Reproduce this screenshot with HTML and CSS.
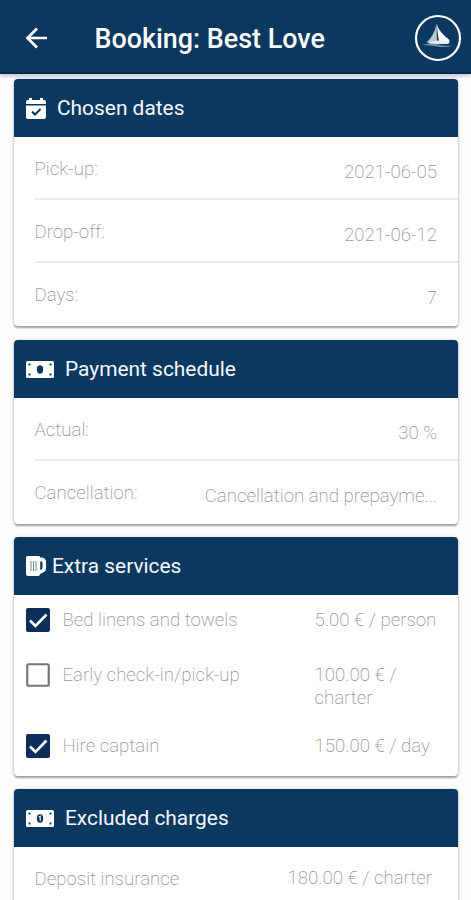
FILE: index.html
```html
<!DOCTYPE html>
<html lang="en">
<head>
<meta charset="utf-8">
<title>Booking: Best Love</title>
<link rel="stylesheet" href="styles.css">
</head>
<body>
<header class="topbar">
  <svg class="back" viewBox="0 0 24 22"><path d="M22 11H3M12 1.5 2.5 11l9.500 9.500" fill="none" stroke="#fff" stroke-width="2.700"/></svg>
  <h1>Booking: Best Love</h1>
  <svg class="logo" viewBox="0 0 48 48">
    <circle cx="24" cy="24" r="22" fill="none" stroke="#fff" stroke-width="2.200"/>
    <path d="M22.500 10 23 28 12.500 28.500Q20 22 22.500 10Z" fill="#b9c9cc"/>
    <path d="M22.500 10Q25 18 35.500 26L35 28.500 25 28Z" fill="#f7faf2"/>
    <path d="M14 28.500 23 26.500 36 28 34 30H16Z" fill="#e5ecea"/>
    <path d="M8 31Q17 28.500 24 30.500T40 31.500Q31 34 23 32.500T8 31Z" fill="#6f8ba2"/>
  </svg>
</header>
<main>
  <section class="card">
    <h2><svg class="calendar" viewBox="0 0 20 23"><path fill="#fff" d="M2 3H3V1H6V3H14V1H17V3H18Q20 3 20 5V7H0V5Q0 3 2 3ZM0 8.500H20V20Q20 22 18 22H2Q0 22 0 20Z"/><path d="m6 14.500 3 3 5.500-5.500" fill="none" stroke="#0b385f" stroke-width="2"/></svg>Chosen dates</h2>
    <div class="row"><span>Pick-up:</span><span class="value">2021-06-05</span></div>
    <div class="row"><span>Drop-off:</span><span class="value">2021-06-12</span></div>
    <div class="row"><span>Days:</span><span class="value">7</span></div>
  </section>
  <section class="card">
    <h2><svg class="money" viewBox="0 0 28 17"><rect width="28" height="17" rx="1.500" fill="#fff"/><ellipse cx="14" cy="8.500" rx="3.200" ry="4.200" fill="#0b385f"/><path d="M2.500 2.500h2v2h-2zM23.500 2.500h2v2h-2zM2.500 12.500h2v2h-2zM23.500 12.500h2v2h-2z" fill="#0b385f"/></svg>Payment schedule</h2>
    <div class="row"><span>Actual:</span><span class="value">30 %</span></div>
    <div class="row"><span>Cancellation:</span><span class="value">Cancellation and prepayme...</span></div>
  </section>
  <section class="card services">
    <h2><svg class="mug" viewBox="0 0 20 20"><path fill="#fff" fill-rule="evenodd" d="M1.500 0H13Q14 0 14 1.500H16Q20 2 20 6V12Q20 15 18 16L14 18Q14 20 12 20H2Q0 20 0 18V1.500Q0 0 1.500 0ZM14.200 5.500V14L16 13Q16.500 12.500 16.500 11V7Q16.500 5.500 15.500 5.500Z"/><path d="M5 5v10M7.500 5v10M10 5v10" stroke="#6d8599" stroke-width="1"/></svg>Extra services</h2>
    <div class="service"><svg class="check" viewBox="0 0 24 24"><rect width="24" height="24" rx="2" fill="#0b2f59"/><path d="m4 12.500 5.500 5.500L20.500 6.500" fill="none" stroke="#fff" stroke-width="2.600"/></svg><span>Bed linens and towels</span><span>5.00 € / person</span></div>
    <div class="service tall"><svg class="check" viewBox="0 0 24 24"><rect x="1.250" y="1.250" width="21.500" height="21.500" rx="1.500" fill="#fff" stroke="#77777a" stroke-width="2.200"/></svg><span>Early check-in/pick-up</span><span>100.00 € /<br>charter</span></div>
    <div class="service"><svg class="check" viewBox="0 0 24 24"><rect width="24" height="24" rx="2" fill="#0b2f59"/><path d="m4 12.500 5.500 5.500L20.500 6.500" fill="none" stroke="#fff" stroke-width="2.600"/></svg><span>Hire captain</span><span>150.00 € / day</span></div>
  </section>
  <section class="card">
    <h2><svg class="money" viewBox="0 0 28 17"><rect width="28" height="17" rx="1.500" fill="#fff"/><ellipse cx="14" cy="8.500" rx="3.200" ry="4.200" fill="#0b385f"/><path d="m12.800 7.200 1.400-.9v4.500" fill="none" stroke="#fff" stroke-width="1.100"/><path d="M2.500 2.500h2v2h-2zM23.500 2.500h2v2h-2zM2.500 12.500h2v2h-2zM23.500 12.500h2v2h-2z" fill="#0b385f"/></svg>Excluded charges</h2>
    <div class="row deposit"><span>Deposit insurance</span><span class="value">180.00 € / charter</span></div>
  </section>
</main>
</body>
</html>
```
FILE: styles.css
```css
* { box-sizing: border-box; }
html { overflow: hidden; }
body {
  margin: 0;
  height: 900px;
  overflow: hidden;
  background: #fdfdfe;
  color: #969696;
  font: 200 18.650px/23px Roboto, sans-serif;
}
.topbar {
  height: 74px;
  padding: 3px 9px 0 25px;
  display: flex;
  align-items: center;
  background: #0b385f;
  border-bottom: 2px solid #062951;
  box-shadow: 0 1px 5px #68709099;
  color: #fff;
}
.back { width: 24px; height: 22px; }
h1 { margin: 2px 0 0 45.500px; font-size: 26.900px; line-height: 30px; font-weight: 500; white-space: nowrap; }
.logo { width: 48px; height: 48px; margin-left: auto; }
main { padding: 5px 13px 0 14px; }
.card {
  margin-bottom: 13px;
  overflow: hidden;
  border-radius: 4px;
  background: #fff;
  box-shadow: 0 2px 2px #00000055, 0 0 4px #00000025;
}
.card:first-child { margin-bottom: 14px; }
h2 {
  height: 58px;
  margin: 0;
  padding: 0 12px;
  display: flex;
  align-items: center;
  background: #0b385f;
  color: #f5f9ff;
  font-size: 20.900px;
  font-weight: 400;
  white-space: nowrap;
}
.calendar { width: 20px; height: 23px; margin-right: 11px; }
.money { width: 28px; height: 17px; margin-right: 11px; }
.mug { width: 20px; height: 20px; margin-right: 6px; }
.row {
  height: 63px;
  margin-left: 20.500px;
  padding: 21px 21px 0 0;
  display: flex;
  justify-content: space-between;
  border-bottom: 2px solid #ebebeb;
  white-space: nowrap;
}
.card:first-child .row { background: #fff; }
.row:last-child { border-bottom: 0; }
.value { padding-top: 3px; }
.services { height: 239px; }
.service {
  height: 54.500px;
  padding: 13px 12px 0;
  display: grid;
  grid-template-columns: 36.500px 252px 1fr;
  align-items: start;
  white-space: nowrap;
}
.service span { padding-top: 1px; }
.tall { height: 71px; }
.check { width: 24px; height: 24px; }
.deposit .value { padding: 0 5px 0 0; margin-top: -1px; }
```
